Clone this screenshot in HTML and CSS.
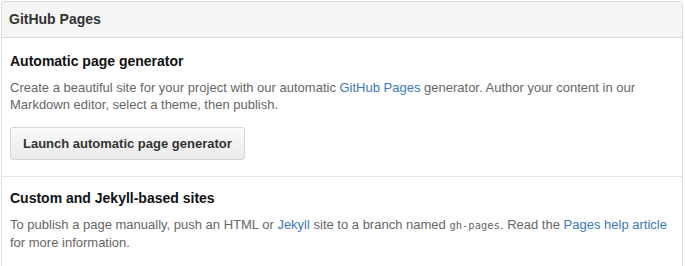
FILE: index.html
```html
<!DOCTYPE html>
<html lang="en">
<head>
    <meta charset="UTF-8">
    <title>GitHub Pages</title>
    <link rel="stylesheet" href="styles.css">
</head>
<body>
    <div class="boxed-group">
        <h3 class="boxed-header">GitHub Pages</h3>
        <div class="boxed-body">
            <div class="section">
                <h4>Automatic page generator</h4>
                <p>Create a beautiful site for your project with our automatic <a href="#">GitHub Pages</a> generator. Author your content in our Markdown editor, select a theme, then publish.</p>
                <button class="btn">Launch automatic page generator</button>
            </div>
            <div class="section">
                <h4>Custom and Jekyll-based sites</h4>
                <p>To publish a page manually, push an HTML or <a href="#">Jekyll</a> site to a branch named <code>gh-pages</code>. Read the <a href="#">Pages help article</a> for more information.</p>
            </div>
        </div>
    </div>
</body>
</html>
```

FILE: styles.css
```css
body {
    margin: 0;
    padding: 1px 1px 0 1px;
    font-family: "Liberation Sans", Arial, sans-serif;
    font-size: 13px;
    color: #333;
    background: #fff;
}
.boxed-group {
    width: 680px;
    border: 1px solid #ddd;
    border-bottom: none;
    border-radius: 3px 3px 0 0;
}
.boxed-header {
    margin: 0;
    padding: 0 7px;
    height: 35px;
    line-height: 35px;
    font-size: 14px;
    font-weight: bold;
    background: #f5f5f5;
    border-bottom: 1px solid #d8d8d8;
}
.section {
    padding: 15px 4px 16px 8px;
    border-bottom: 1px solid #e5e5e5;
}
.section:last-child {
    padding-top: 13px;
    border-bottom: none;
}
h4 {
    margin: 0 0 10px 0;
    font-size: 14px;
    line-height: 16px;
    font-weight: bold;
    color: #111;
}
p {
    margin: 0;
    color: #666;
    line-height: 17px;
}
a {
    color: #4078c0;
    text-decoration: none;
}
code {
    font-family: "DejaVu Sans Mono", monospace;
    font-size: 10.5px;
}
.btn {
    display: block;
    margin-top: 14px;
    height: 33px;
    padding: 0 12px;
    font-family: inherit;
    font-size: 13px;
    font-weight: bold;
    color: #333;
    background: linear-gradient(#fafafa, #eaeaea);
    border: 1px solid #d5d5d5;
    border-radius: 3px;
}
```
